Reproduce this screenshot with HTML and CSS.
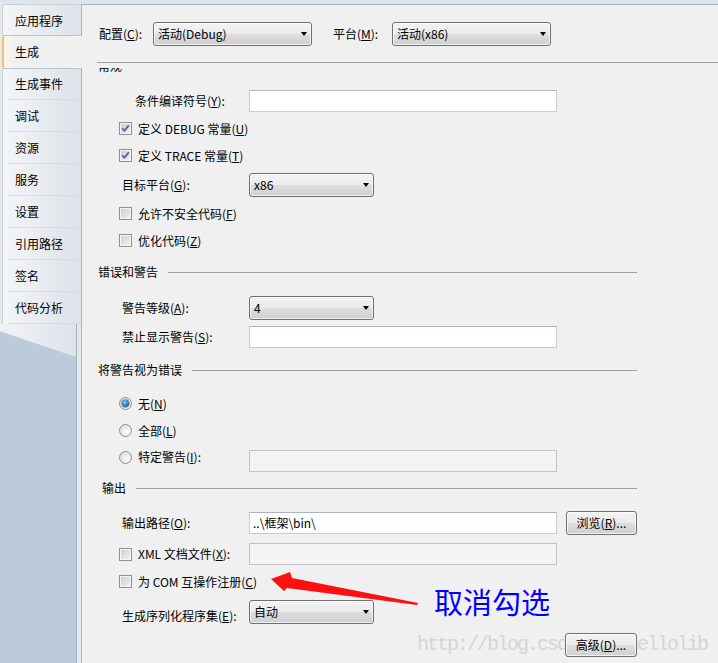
FILE: index.html
```html
<!DOCTYPE html>
<html lang="zh-CN">
<head>
<meta charset="utf-8">
<title>生成</title>
<link rel="stylesheet" href="styles.css">
</head>
<body>
<div class="window">
  <aside class="sidebar">
    <nav class="tabs">
      <div class="tab first">应用程序</div>
      <div class="tab active">生成</div>
      <div class="tab after-active">生成事件</div>
      <div class="tab">调试</div>
      <div class="tab">资源</div>
      <div class="tab">服务</div>
      <div class="tab">设置</div>
      <div class="tab">引用路径</div>
      <div class="tab">签名</div>
      <div class="tab">代码分析</div>
    </nav>
    <div class="sidebar-fill"><div class="tail"></div></div>
  </aside>

  <main class="main">
    <div class="config">
      <span class="lbl1">配置(<u>C</u>):</span>
      <div class="combo wide">活动(Debug)</div>
      <span class="lbl2">平台(<u>M</u>):</span>
      <div class="combo wide">活动(x86)</div>
    </div>
    <div class="rule"></div>
    <div class="viewport">
      <div class="content">
        <div class="section">常规</div>

        <div class="field f-cond">
          <span class="label indent">条件编译符号(<u>Y</u>):</span>
          <div class="input"></div>
        </div>
        <div class="check f-debug">
          <span class="cb checked"><svg width="13" height="13" viewBox="0 0 13 13"><path d="M3.2 6.3 L5.4 8.8 L9.8 3.4" fill="none" stroke="#4a5d8f" stroke-width="1.7"/></svg></span>
          <span>定义 DEBUG 常量(<u>U</u>)</span>
        </div>
        <div class="check">
          <span class="cb checked"><svg width="13" height="13" viewBox="0 0 13 13"><path d="M3.2 6.3 L5.4 8.8 L9.8 3.4" fill="none" stroke="#4a5d8f" stroke-width="1.7"/></svg></span>
          <span>定义 TRACE 常量(<u>T</u>)</span>
        </div>
        <div class="field f-target">
          <span class="label">目标平台(<u>G</u>):</span>
          <div class="combo small">x86</div>
        </div>
        <div class="check f-unsafe">
          <span class="cb"></span>
          <span>允许不安全代码(<u>F</u>)</span>
        </div>
        <div class="check">
          <span class="cb"></span>
          <span>优化代码(<u>Z</u>)</span>
        </div>

        <div class="section s-errors">错误和警告</div>
        <div class="field f-level">
          <span class="label">警告等级(<u>A</u>):</span>
          <div class="combo small">4</div>
        </div>
        <div class="field f-suppress">
          <span class="label">禁止显示警告(<u>S</u>):</span>
          <div class="input"></div>
        </div>

        <div class="section s-treat">将警告视为错误</div>
        <div class="check f-none">
          <span class="rb on"><span class="dot"></span></span>
          <span>无(<u>N</u>)</span>
        </div>
        <div class="check">
          <span class="rb"></span>
          <span>全部(<u>L</u>)</span>
        </div>
        <div class="check f-specific">
          <span class="opt"><span class="rb"></span><span>特定警告(<u>I</u>):</span></span>
          <div class="input disabled"></div>
        </div>

        <div class="section s-output">输出</div>
        <div class="field f-path">
          <span class="label">输出路径(<u>O</u>):</span>
          <div class="input">..\框架\bin\</div>
          <div class="btn browse">浏览(<u>R</u>)...</div>
        </div>
        <div class="check f-xml">
          <span class="opt"><span class="cb"></span><span>XML 文档文件(<u>X</u>):</span></span>
          <div class="input disabled"></div>
        </div>
        <div class="check f-com">
          <span class="cb"></span>
          <span>为 COM 互操作注册(<u>C</u>)</span>
        </div>
        <div class="field f-serial">
          <span class="label low">生成序列化程序集(<u>E</u>):</span>
          <div class="combo small">自动</div>
        </div>
        <div class="field f-adv">
          <div class="btn advanced">高级(<u>D</u>)...</div>
        </div>
      </div>
    </div>
  </main>
</div>

<div class="watermark">http://blog.csdn.net/hellolib</div>
<svg class="arrow" width="170" height="45" viewBox="258 568 170 45">
  <polygon points="271,579 290,572 292,578 418,603 417,605 287,588 284,591" fill="#ff1010"/>
</svg>
<div class="note">取消勾选</div>
</body>
</html>
```

FILE: styles.css
```css
html, body {
  margin: 0;
  padding: 0;
}
body {
  width: 718px;
  height: 663px;
  overflow: hidden;
  position: relative;
  font-family: "Noto Sans CJK SC", "Noto Sans", sans-serif;
  font-size: 12px;
  line-height: 16px;
  color: #000;
  background: #f0f0f0;
}
u { text-decoration: underline; text-underline-offset: 1px; }

.window {
  display: flex;
  height: 663px;
  box-sizing: border-box;
  padding-top: 4px;
  background: #dfe5ec;
}

/* ---------- left tab column ---------- */
.sidebar {
  width: 82px;
  flex: none;
  box-sizing: border-box;
  border-right: 1px solid #a9b5c5;
  background: #e4e9ee;
  display: flex;
  flex-direction: column;
}
.tabs {
  padding-left: 2px;
}
.tab {
  height: 32px;
  box-sizing: border-box;
  display: flex;
  align-items: center;
  padding-left: 12px;
  border-left: 1px solid #c9d0d9;
  background:
    linear-gradient(#d6dce4, #d6dce4) 5px 100% / calc(100% - 5px) 1px no-repeat,
    linear-gradient(to right, #f4f5f7, #dce2e9);
}
.tab.first {
  border-top: 1px solid #c9d0d9;
  border-top-left-radius: 3px;
  background:
    linear-gradient(#b9c4d2, #b9c4d2) 0 100% / 100% 1px no-repeat,
    linear-gradient(to right, #f4f5f7, #dce2e9);
}
.tab.after-active {
  background:
    linear-gradient(#b9c4d2, #b9c4d2) 0 0 / 100% 1px no-repeat,
    linear-gradient(#d6dce4, #d6dce4) 5px 100% / calc(100% - 5px) 1px no-repeat,
    linear-gradient(to right, #f4f5f7, #dce2e9);
}
.tab.active {
  margin-right: -1px;
  padding-left: 11px;
  border-left: 2px solid #f1c26a;
  border-radius: 3px 0 0 3px;
  background: linear-gradient(to right, #fbf6ec, #f0f0f0 12px);
}
.sidebar-fill {
  flex: 1;
  margin-right: 4px;
  background: #bccadb;
  border-right: 1px solid #a3b1c3;
}
.tail {
  height: 33px;
  background: linear-gradient(to right, #f2f3f5, #dde3ea);
  clip-path: polygon(0 0, 100% 0, 100% 100%, 0 22%);
}

/* ---------- main panel ---------- */
.main {
  flex: 1;
  min-width: 0;
  border-top: 1px solid #a9b5c5;
  background: #f0f0f0;
  display: flex;
  flex-direction: column;
}
.config {
  display: flex;
  align-items: center;
  height: 24px;
  padding: 17px 0 0 17px;
}
.lbl1 { width: 54px; flex: none; }
.lbl2 { width: 59px; flex: none; margin-left: 21px; }

.rule {
  height: 1px;
  background: #a0a0a0;
  margin: 16px 0 5px 15px;
  flex: none;
}
.viewport {
  flex: 1;
  overflow: hidden;
}
.content {
  margin-top: -10px;
}

.section {
  display: flex;
  align-items: center;
  height: 16px;
  padding-left: 16px;
  margin-right: 81px;
}
.section::after {
  content: "";
  flex: 1;
  height: 1px;
  background: #a0a0a0;
  margin-left: 10px;
}
.s-output { padding-left: 20px; }

.field {
  display: flex;
  align-items: center;
  padding-left: 40px;
}
.field > .label {
  width: 127px;
  flex: none;
}
.label.indent { padding-left: 13px; box-sizing: border-box; }
.label.low { padding-top: 8px; }

.check {
  display: flex;
  align-items: center;
  height: 27px;
  padding-left: 37px;
}
.opt {
  display: flex;
  align-items: center;
  width: 130px;
  flex: none;
}

/* vertical rhythm */
.f-cond { margin-top: 16px; height: 22px; }
.f-debug { margin-top: 3px; }
.f-target { margin-top: 4px; height: 24px; }
.f-unsafe { margin-top: 3px; }
.s-errors { margin-top: 10px; }
.f-level { margin-top: 16px; height: 24px; }
.f-suppress { margin-top: 6px; height: 22px; }
.s-treat { margin-top: 14px; }
.f-none { margin-top: 12px; }
.f-specific { margin-top: 6px; height: 22px; align-items: flex-start; }
.f-specific .opt { margin-top: -1px; height: 16px; }
.s-output { margin-top: 8px; }
.f-path { margin-top: 15px; height: 24px; }
.f-xml { margin-top: 8px; height: 22px; }
.f-com { margin-top: 3px; }
.f-serial { margin-top: 5px; height: 24px; }
.f-adv { margin-top: 9px; height: 24px; justify-content: flex-end; margin-right: 81px; }

/* ---------- controls ---------- */
.cb {
  width: 13px;
  height: 13px;
  flex: none;
  box-sizing: border-box;
  margin-right: 6px;
  border: 1px solid #8e8f8f;
  background: linear-gradient(135deg, #c9ccd1, #f4f4f5);
  box-shadow: inset 0 0 0 1px #f6f6f6;
  position: relative;
}
.cb svg {
  display: block;
  margin: -1px;
}
.rb {
  width: 13px;
  height: 13px;
  flex: none;
  box-sizing: border-box;
  margin-right: 6px;
  border: 1px solid #8e8f8f;
  border-radius: 50%;
  background: radial-gradient(circle at 65% 65%, #ffffff 0, #f0f0f0 35%, #cfd1d4 100%);
  display: flex;
  align-items: center;
  justify-content: center;
}
.rb .dot {
  width: 7px;
  height: 7px;
  border-radius: 50%;
  background: radial-gradient(circle at 40% 35%, #8fd3fb 0, #2f86cc 45%, #0f4a8a 100%);
  box-shadow: 0 0 0 0.5px #1c4f7e;
}

.input {
  width: 308px;
  height: 22px;
  flex: none;
  box-sizing: border-box;
  border: 1px solid #c4ccd6;
  border-top-color: #abb4c0;
  background: #fff;
  padding: 0 3px;
  display: flex;
  align-items: center;
}
.input.disabled {
  background: #f3f3f3;
  border-color: #c3c3c3;
}

.combo, .btn {
  height: 24px;
  box-sizing: border-box;
  border: 1px solid #707070;
  border-radius: 3px;
  background: linear-gradient(#f3f3f3 0%, #ebebeb 48%, #dddddd 52%, #d0d0d0 100%);
  box-shadow: inset 0 0 0 1px rgba(255,255,255,0.7);
  display: flex;
  align-items: center;
}
.combo {
  padding: 0 4px 0 4px;
  flex: none;
}
.combo::after {
  content: "";
  margin-left: auto;
  width: 0;
  height: 0;
  border-left: 3.5px solid transparent;
  border-right: 3.5px solid transparent;
  border-top: 4px solid #000;
}
.combo.wide { width: 159px; }
.combo.small { width: 125px; }

.btn {
  justify-content: center;
  flex: none;
}
.btn.browse { width: 71px; margin-left: 9px; }
.btn.advanced { width: 72px; position: relative; z-index: 2; }

/* ---------- annotations ---------- */
.watermark {
  position: absolute;
  left: 417px;
  top: 635px;
  font-family: "Liberation Mono", monospace;
  font-size: 20px;
  line-height: 20px;
  letter-spacing: -2px;
  color: #d5d5d5;
  z-index: 1;
  white-space: nowrap;
}
.arrow {
  position: absolute;
  left: 258px;
  top: 568px;
  z-index: 3;
}
.note {
  position: absolute;
  left: 434px;
  top: 586px;
  font-family: "Noto Sans CJK SC", sans-serif;
  font-size: 29px;
  line-height: 30px;
  color: #0000ff;
  z-index: 3;
  white-space: nowrap;
}
```
